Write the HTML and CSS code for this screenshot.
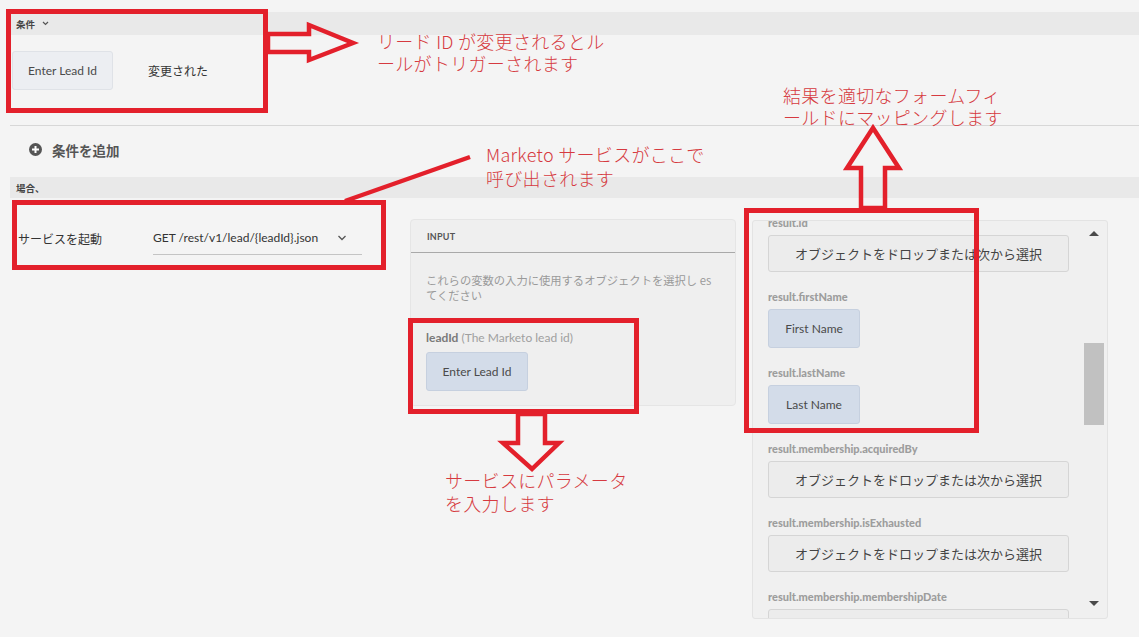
FILE: index.html
```html
<!DOCTYPE html>
<html lang="ja">
<head>
<meta charset="utf-8">
<title>ルール</title>
<link rel="stylesheet" href="styles.css">
</head>
<body>
<div class="page">
  <div class="band band-cond">
    <span class="band-title">条件</span>
    <svg class="band-chev" width="7" height="5" viewBox="0 0 7 5"><path d="M1 1 L3.5 3.5 L6 1" fill="none" stroke="#555" stroke-width="1.2"/></svg>
  </div>
  <div class="trigger-row">
    <div class="chip chip-plain">Enter Lead Id</div>
    <span class="changed">変更された</span>
  </div>
  <hr class="divider">
  <div class="add-row">
    <svg class="plus" width="13" height="13" viewBox="0 0 13 13"><circle cx="6.5" cy="6.5" r="6.5" fill="#555"/><path d="M6.5 3 V10 M3 6.5 H10" stroke="#fff" stroke-width="2"/></svg>
    <span class="add-text">条件を追加</span>
  </div>
  <div class="band band-when"><span class="band-title">場合、</span></div>

  <div class="main-row">
    <div class="invoke">
      <span class="invoke-label">サービスを起動</span>
      <div class="select">
        <span>GET /rest/v1/lead/{leadId}.json</span>
        <svg width="10" height="6" viewBox="0 0 10 6"><path d="M1.5 1 L5 4.5 L8.5 1" fill="none" stroke="#555" stroke-width="1.3"/></svg>
      </div>
    </div>

    <div class="input-panel">
      <div class="input-head">INPUT</div>
      <div class="input-body">
        <p class="input-desc">これらの変数の入力に使用するオブジェクトを選択し es<br>てください</p>
        <div class="param-label"><b>leadId</b> (The Marketo lead id)</div>
        <div class="chip chip-blue">Enter Lead Id</div>
      </div>
    </div>

    <div class="output-panel">
      <div class="output-scroll">
        <div class="results">
          <div class="result">
            <div class="result-label">result.id</div>
            <div class="drop">オブジェクトをドロップまたは次から選択</div>
          </div>
          <div class="result">
            <div class="result-label">result.firstName</div>
            <div class="chip chip-blue chip-sm">First Name</div>
          </div>
          <div class="result">
            <div class="result-label">result.lastName</div>
            <div class="chip chip-blue chip-sm">Last Name</div>
          </div>
          <div class="result">
            <div class="result-label">result.membership.acquiredBy</div>
            <div class="drop">オブジェクトをドロップまたは次から選択</div>
          </div>
          <div class="result">
            <div class="result-label">result.membership.isExhausted</div>
            <div class="drop">オブジェクトをドロップまたは次から選択</div>
          </div>
          <div class="result">
            <div class="result-label">result.membership.membershipDate</div>
            <div class="drop">オブジェクトをドロップまたは次から選択</div>
          </div>
        </div>
      </div>
      <div class="scrollbar">
        <span class="sb-up"></span>
        <div class="sb-track"><div class="sb-thumb" style="margin-top:99px;height:82px"></div></div>
        <span class="sb-down"></span>
      </div>
    </div>
  </div>

  <!-- annotation overlays -->
  <div class="mark mark-1"></div>
  <div class="mark mark-2"></div>
  <div class="mark mark-3"></div>
  <div class="mark mark-4"></div>
  <svg class="arrows" width="1139" height="637" viewBox="0 0 1139 637">
    <g fill="none" stroke="#e3202b" stroke-width="4.5" stroke-linejoin="miter">
      <polygon points="268,34 309,34 309,25 353,43 309,60 309,52 268,52"/>
      <polygon points="861,208 861,168 847,168 873,128 899,168 885,168 885,208"/>
      <polygon points="518,414 518,443 503,443 532,469 559,443 545,443 545,414"/>
      <line x1="470" y1="157" x2="345" y2="201"/>
    </g>
  </svg>
  <div class="note note-1">リード ID が変更されるとル<br>ールがトリガーされます</div>
  <div class="note note-2">Marketo サービスがここで<br>呼び出されます</div>
  <div class="note note-3">結果を適切なフォームフィ<br>ールドにマッピングします</div>
  <div class="note note-4">サービスにパラメータ<br>を入力します</div>
</div>
</body>
</html>
```
FILE: styles.css
```css
* { box-sizing: border-box; }
html, body { margin: 0; padding: 0; }
body {
  background: #f4f4f4;
  font-family: Lato, "Noto Sans CJK JP", sans-serif;
  color: #333;
  width: 1139px;
  height: 637px;
  overflow: hidden;
}
.page {
  position: relative;
  padding: 12px 0 0 10px;
  height: 637px;
}

/* bands */
.band {
  background: #e9e9e9;
  display: flex;
  align-items: center;
  padding-left: 6px;
}
.band-cond { height: 23px; }
.band-when { height: 21px; }
.band-title {
  font-size: 9.5px;
  font-weight: bold;
  color: #444;
  font-family: "Noto Sans CJK JP", sans-serif;
}
.band-chev { margin-left: 7px; }

/* trigger row */
.trigger-row {
  display: flex;
  align-items: center;
  margin-top: 16px;
  padding-left: 2px;
}
.chip {
  display: flex;
  align-items: center;
  justify-content: center;
  font-size: 12px;
  color: #4a4a4a;
  border-radius: 3px;
}
.chip-plain {
  width: 101px;
  height: 39px;
  background: #eceef2;
  border: 1px solid #dfe2e7;
}
.chip-blue {
  width: 102px;
  height: 39px;
  background: #d3dce9;
  border: 1px solid #c6d0df;
}
.chip-sm { width: 92px; }
.changed {
  margin-left: 35px;
  font-size: 12px;
  color: #333;
  font-family: "Noto Sans CJK JP", sans-serif;
}

.divider {
  margin: 35px 0 0;
  border: 0;
  border-top: 1px solid #d7d7d7;
  height: 0;
}

/* add condition */
.add-row {
  height: 51px;
  display: flex;
  align-items: center;
  padding: 0 0 4px 19px;
}
.add-text {
  margin-left: 10px;
  font-size: 13.5px;
  font-weight: bold;
  color: #555;
  font-family: "Noto Sans CJK JP", sans-serif;
}

/* main row */
.main-row {
  display: flex;
  align-items: flex-start;
}
.invoke {
  width: 400px;
  height: 36px;
  margin-top: 22px;
  padding-left: 8px;
  display: flex;
  align-items: center;
}
.invoke-label {
  width: 135px;
  font-size: 12px;
  color: #333;
  font-family: "Noto Sans CJK JP", sans-serif;
}
.select {
  width: 209px;
  height: 34px;
  border-bottom: 1px solid #c4c4c4;
  display: flex;
  align-items: center;
  justify-content: space-between;
  padding-right: 15px;
  font-size: 12px;
  color: #333;
}

/* input panel */
.input-panel {
  width: 326px;
  margin-top: 21px;
  background: #efefef;
  border: 1px solid #e5e5e5;
  border-radius: 4px;
}
.input-head {
  height: 33px;
  border-bottom: 1px solid #a9a9a9;
  display: flex;
  align-items: center;
  padding-left: 16px;
  font-size: 9px;
  font-weight: bold;
  color: #555;
  letter-spacing: 0.2px;
}
.input-body { padding: 20px 15px 14px 15px; }
.input-desc {
  margin: 0;
  font-size: 11.3px;
  line-height: 15px;
  color: #9a9a9a;
  font-family: "Noto Sans CJK JP", sans-serif;
  white-space: nowrap;
}
.param-label {
  margin-top: 27px;
  margin-bottom: 7px;
  font-size: 12px;
  line-height: 15px;
  color: #a0a0a0;
}
.param-label b { color: #7a7a7a; }

/* output panel */
.output-panel {
  width: 356px;
  height: 399px;
  margin-top: 22px;
  margin-left: 16px;
  background: #f0f0f0;
  border: 1px solid #e3e3e3;
  border-radius: 3px;
  display: flex;
}
.output-scroll {
  width: 330px;
  overflow: hidden;
  padding-left: 15px;
}
.results { margin-top: -5px; }
.result { margin-bottom: 18px; }
.result-label {
  font-size: 11px;
  line-height: 14px;
  font-weight: 900;
  color: #9d9d9d;
  margin-bottom: 5px;
}
.drop {
  width: 301px;
  height: 37px;
  background: #ececec;
  border: 1px solid #d5d5d5;
  border-radius: 3px;
  display: flex;
  align-items: center;
  justify-content: center;
  font-size: 13px;
  color: #444;
  font-family: "Noto Sans CJK JP", sans-serif;
}

/* scrollbar */
.scrollbar {
  width: 22px;
  display: flex;
  flex-direction: column;
  align-items: center;
  padding: 10px 0 12px;
}
.sb-up, .sb-down {
  width: 0;
  height: 0;
  border-left: 5px solid transparent;
  border-right: 5px solid transparent;
}
.sb-up { border-bottom: 5px solid #4a4a4a; }
.sb-down { border-top: 5px solid #4a4a4a; }
.sb-track {
  flex: 1;
  width: 100%;
  margin: 8px 0;
}
.sb-thumb {
  width: 20px;
  margin-left: 1px;
  background: #c1c1c1;
}

/* annotations */
.mark {
  position: absolute;
  border: 5px solid #e3202b;
}
.mark-1 { left: 6px; top: 9px; width: 262px; height: 104px; }
.mark-2 { left: 12px; top: 200px; width: 374px; height: 70px; }
.mark-3 { left: 408px; top: 318px; width: 231px; height: 96px; }
.mark-4 { left: 744px; top: 208px; width: 235px; height: 225px; }
.arrows {
  position: absolute;
  left: 0;
  top: 0;
  pointer-events: none;
}
.note {
  position: absolute;
  font-family: "Noto Sans CJK JP", sans-serif;
  font-size: 18px;
  font-weight: 300;
  line-height: 22px;
  color: #d63a40;
  white-space: nowrap;
  letter-spacing: 0.3px;
}
.note-1 { left: 377px; top: 30px; }
.note-2 { left: 486px; top: 142px; line-height: 24px; }
.note-3 { left: 783px; top: 84px; }
.note-4 { left: 445px; top: 469px; line-height: 23px; }
```
